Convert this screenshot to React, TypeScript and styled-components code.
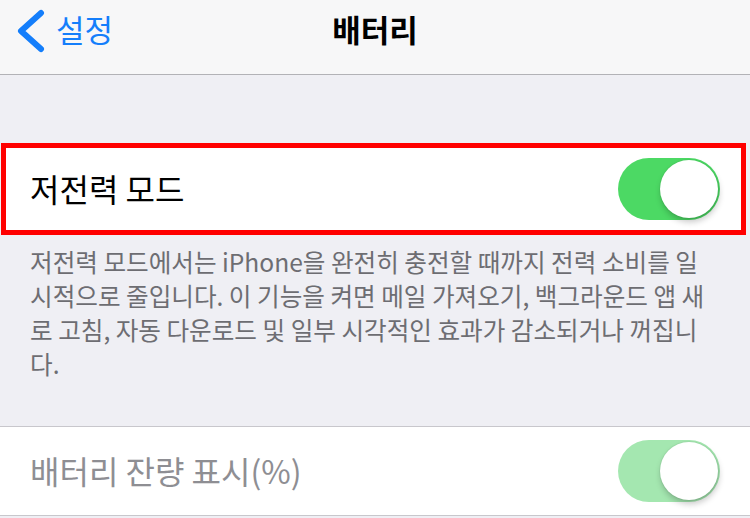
import styled, { createGlobalStyle } from "styled-components"

const GlobalStyle = createGlobalStyle`
  html, body {
    margin: 0;
    padding: 0;
    background: #efeff4;
  }
  body {
    font-family: "Noto Sans CJK KR", "Noto Sans", sans-serif;
    -webkit-font-smoothing: antialiased;
  }
`

const Page = styled.div`
  width: 750px;
  height: 518px;
  overflow: hidden;
  background: #efeff4;
`

const NavBar = styled.div`
  height: 75px;
  box-sizing: border-box;
  border-bottom: 1px solid #b2b2b6;
  background: #f7f7f8;
  display: grid;
  grid-template-columns: 1fr auto 1fr;
  align-items: center;
  padding-bottom: 13px;
`

const BackButton = styled.div`
  display: flex;
  align-items: center;
  gap: 10px;
  padding-left: 16px;
  color: #147efb;
  font-size: 31px;
  line-height: 40px;
`

const BackText = styled.span`
  margin-top: -4px;
`

const Title = styled.div`
  font-size: 31px;
  line-height: 40px;
  font-weight: 700;
  color: #000;
  margin-top: -4px;
`

const Spacer = styled.div<{ h: number }>`
  height: ${({ h }) => h}px;
`

const HighlightRow = styled.div`
  height: 92px;
  box-sizing: border-box;
  margin: 0 4px 0 1px;
  border: 5px solid #ff0000;
  background: #fff;
  display: flex;
  align-items: center;
  justify-content: space-between;
  padding: 0 21px 0 24px;
`

const Row = styled.div`
  height: 90px;
  box-sizing: border-box;
  border-top: 1px solid #c8c7cc;
  border-bottom: 1px solid #c8c7cc;
  background: #fff;
  display: flex;
  align-items: center;
  justify-content: space-between;
  padding: 0 30px;
`

const Label = styled.div<{ dim?: boolean }>`
  font-size: 32px;
  color: ${({ dim }) => (dim ? "#8e8e93" : "#000")};
  margin-top: -3px;
`

const Footer = styled.div`
  padding: 9px 30px 0 30px;
  font-size: 24.6px;
  line-height: 34px;
  color: #6d6d72;
  height: 191px;
  box-sizing: border-box;
  white-space: nowrap;
`

const Switch = styled.div<{ dim?: boolean }>`
  width: 102px;
  height: 62px;
  border-radius: 31px;
  background: ${({ dim }) => (dim ? "#a4e7b0" : "#4cd964")};
  display: flex;
  align-items: center;
  justify-content: flex-end;
  padding: 2px;
  box-sizing: border-box;
`

const Knob = styled.div`
  width: 58px;
  height: 58px;
  border-radius: 50%;
  background: #fff;
  box-shadow: 1px 4px 6px rgba(0, 0, 0, 0.22), 0 0 0 1px rgba(0, 0, 0, 0.04);
`

const footerLines = [
  "저전력 모드에서는 iPhone을 완전히 충전할 때까지 전력 소비를 일",
  "시적으로 줄입니다. 이 기능을 켜면 메일 가져오기, 백그라운드 앱 새",
  "로 고침, 자동 다운로드 및 일부 시각적인 효과가 감소되거나 꺼집니",
  "다.",
]

export default function App() {
  return (
    <Page>
      <GlobalStyle />
      <NavBar>
        <BackButton>
          <svg width="30" height="44" viewBox="0 0 30 44">
            <polyline
              points="25,4 5,22 25,40"
              fill="none"
              stroke="#147efb"
              strokeWidth="6"
              strokeLinecap="round"
              strokeLinejoin="round"
            />
          </svg>
          <BackText>설정</BackText>
        </BackButton>
        <Title>배터리</Title>
        <div />
      </NavBar>
      <Spacer h={68} />
      <HighlightRow>
        <Label>저전력 모드</Label>
        <Switch>
          <Knob />
        </Switch>
      </HighlightRow>
      <Footer>
        {footerLines.map((line) => (
          <div key={line}>{line}</div>
        ))}
      </Footer>
      <Row>
        <Label dim>배터리 잔량 표시(%)</Label>
        <Switch dim>
          <Knob />
        </Switch>
      </Row>
    </Page>
  )
}
